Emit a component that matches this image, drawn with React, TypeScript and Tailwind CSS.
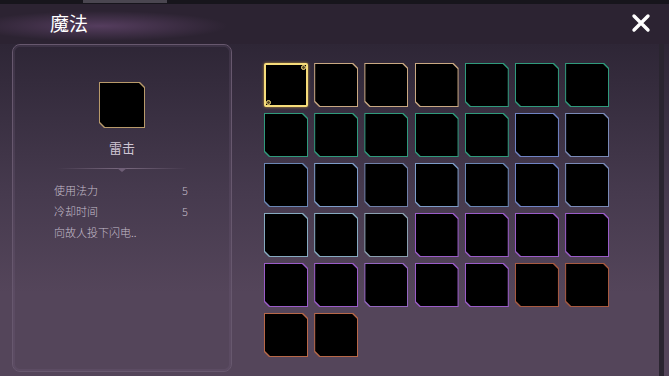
import React from "react";

const cut = "[clip-path:polygon(0_0,calc(100%-5px)_0,100%_5px,100%_100%,5px_100%,0_calc(100%-5px))]";

const rows: string[][] = [
  ["sel", "#c9a882", "#c9a882", "#c9a882", "#2f9a7c", "#2f9a7c", "#2f9a7c"],
  ["#2f9a7c", "#2f9a7c", "#2f9a7c", "#2f9a7c", "#2f9a7c", "#6f83c4", "#7a8ab8"],
  ["#6a86b4", "#7d9cc8", "#6f80a8", "#7d9cc8", "#6a86b4", "#6f83c4", "#7a8ab8"],
  ["#86aac0", "#86aac0", "#8aa0b0", "#9a5cc8", "#9a5cc8", "#9a5cc8", "#9a5cc8"],
  ["#9a5cc8", "#9a5cc8", "#9466c0", "#9a5cc8", "#9a5cc8", "#a85a40", "#a85a40"],
  ["#b86848", "#b86848"],
];

function Cell({ color }: { color: string }) {
  if (color === "sel") {
    return (
      <div className="relative h-[44px] w-[44px] rounded-[2px] border-2 border-[#f6dc7a] bg-black shadow-[0_0_3px_#b8903a]">
        <span className="absolute right-[0px] top-[0px] h-[5px] w-[5px] rounded-full border border-[#f6dc7a] bg-[#5a4a2a]" />
        <span className="absolute bottom-[0px] left-[0px] h-[5px] w-[5px] rounded-full border border-[#f6dc7a] bg-[#5a4a2a]" />
      </div>
    );
  }
  return (
    <div className={`h-[44px] w-[44px] p-px ${cut}`} style={{ backgroundColor: color }}>
      <div className={`h-full w-full bg-black ${cut}`} />
    </div>
  );
}

export default function App() {
  return (
    <div
      className="relative flex h-[376px] w-[669px] flex-col overflow-hidden bg-[#2a2530]"
      style={{ fontFamily: '"Noto Sans CJK SC", "Noto Sans", sans-serif' }}
    >
      {/* top strip */}
      <div className="flex h-[4px] shrink-0 bg-[#17151c] pl-[83px]">
        <div className="h-[3px] w-[84px] bg-[#4a4650]" />
      </div>

      {/* header */}
      <div className="flex h-[40px] shrink-0 items-center justify-between bg-[radial-gradient(ellipse_170px_20px_at_100px_55%,#553d5e,#2c2332_75%)] pl-[50px] pr-[18px]">
        <span className="mt-[-3px] text-[19px] leading-none text-white">魔法</span>
        <svg width="20" height="20" viewBox="0 0 20 20" className="mt-[-2px]">
          <path d="M3 3 L17 17 M17 3 L3 17" stroke="white" strokeWidth="3.4" strokeLinecap="round" />
        </svg>
      </div>

      {/* body */}
      <div className="flex flex-1 bg-[linear-gradient(180deg,#2e2636_0%,#463a4e_45%,#54455a_75%,#54455a_100%)] pl-[12px] pr-[5px]">
        <div className="flex h-[328px] w-[220px] flex-col items-center rounded-[8px] border border-[#67586e] shadow-[inset_0_0_0_2px_rgba(120,100,130,0.2)]">
          <div className={`mt-[37px] h-[46px] w-[46px] bg-[#b89a6a] p-px ${cut}`}>
            <div className={`h-full w-full bg-black ${cut}`} />
          </div>
          <div className="mt-[13px] text-[13px] leading-none text-[#cfc6d4]">雷击</div>
          <div className="relative mt-[14px] h-px w-[130px] bg-[linear-gradient(90deg,transparent,#7a6a80,transparent)]">
            <span className="absolute left-1/2 top-0 h-0 w-0 -translate-x-1/2 border-x-[5px] border-t-[4px] border-x-transparent border-t-[#6e5e76]" />
          </div>
          <div className="mt-[15px] flex w-full flex-col gap-[8px] pl-[41px] pr-[43px] text-[11px] font-light leading-[13px] text-[#c4bcca]">
            <div className="flex justify-between">
              <span>使用法力</span>
              <span>5</span>
            </div>
            <div className="flex justify-between">
              <span>冷却时间</span>
              <span>5</span>
            </div>
            <div>向故人投下闪电..</div>
          </div>
        </div>

        <div className="ml-[32px] mt-[19px] flex flex-col gap-[6px]">
          {rows.map((r, i) => (
            <div key={i} className="flex gap-[6.2px]">
              {r.map((c, j) => (
                <Cell key={j} color={c} />
              ))}
            </div>
          ))}
        </div>

        <div className="flex-1" />
        <div className="w-[5px] bg-[#2a2530]" />
      </div>
    </div>
  );
}
